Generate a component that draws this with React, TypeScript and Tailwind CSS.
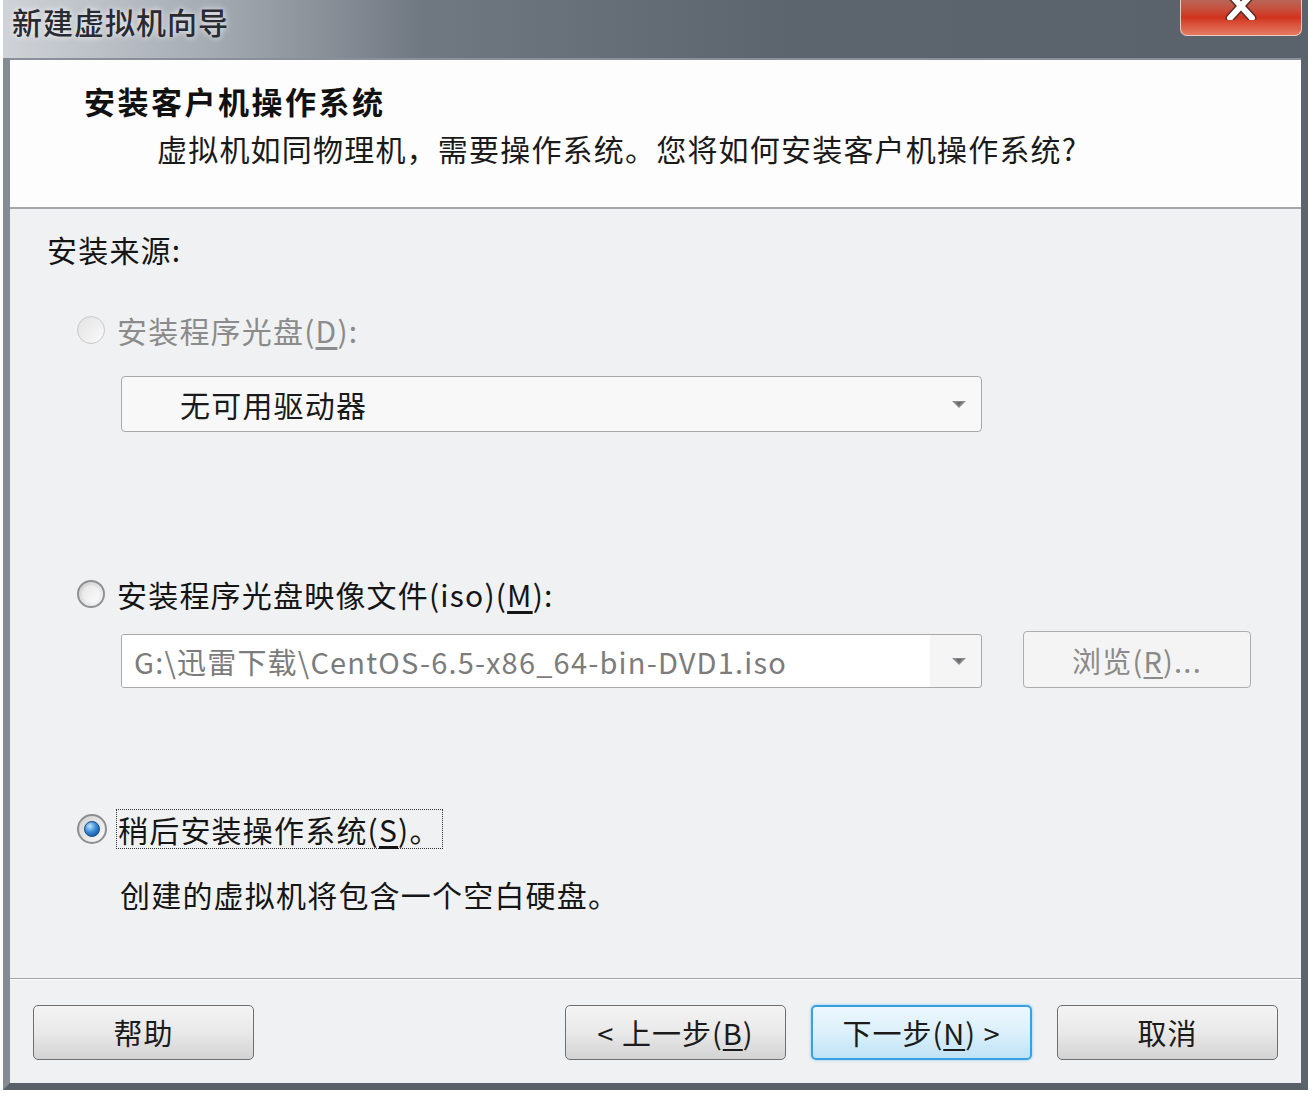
import React from "react";

const font = "font-['Noto_Sans_CJK_SC','Noto_Sans',sans-serif]";

function Radio({ state }: { state: "disabled" | "off" | "on" }) {
  if (state === "disabled") {
    return (
      <span className="w-[28px] h-[28px] rounded-full border border-[#c9c9c9] bg-gradient-to-br from-[#e2e2e2] to-[#fbfbfb] shrink-0" />
    );
  }
  if (state === "off") {
    return (
      <span className="w-[28px] h-[28px] rounded-full border-2 border-[#8f9192] bg-gradient-to-br from-[#cfcfcf] to-[#fafafa] flex items-center justify-center shrink-0">
        <span className="w-[18px] h-[18px] rounded-full bg-gradient-to-br from-[#e4e4e4] to-[#fdfdfd]" />
      </span>
    );
  }
  return (
    <span className="w-[30px] h-[30px] rounded-full border-2 border-[#8c8e90] bg-gradient-to-br from-[#d2d2d2] to-[#fafafa] flex items-center justify-center shrink-0">
      <span className="w-[16px] h-[16px] rounded-full bg-[radial-gradient(circle_at_35%_30%,#bfe6ff_0%,#3a8ad6_45%,#0e3f86_100%)] border border-[#0f4a8f]" />
    </span>
  );
}

function Arrow() {
  return (
    <svg width="16" height="9" viewBox="0 0 16 9">
      <polygon points="1,1 15,1 8,8" fill="#8a8a8a" />
      <polygon points="5,2 11,2 8,6" fill="#6d6670" />
    </svg>
  );
}

function Btn({ children, primary }: { children: React.ReactNode; primary?: boolean }) {
  return (
    <button
      className={
        primary
          ? "w-[221px] h-[55px] rounded-[5px] border-2 border-[#3aa0e2] bg-gradient-to-b from-[#ecf7fd] via-[#dcf0fb] to-[#bfe3f6] shadow-[0_0_3px_#7cc8f2] text-[29px] tracking-[1px] text-[#1b1b1b] flex items-center justify-center"
          : "w-[221px] h-[55px] rounded-[5px] border border-[#6f6f6f] bg-gradient-to-b from-[#f4f4f4] via-[#e9e9e9] to-[#d3d3d3] text-[29px] tracking-[1px] text-[#1b1b1b] flex items-center justify-center"
      }
    >
      {children}
    </button>
  );
}

export default function App() {
  return (
    <div className={`w-[1316px] h-[1120px] bg-white ${font}`}>
      <div className="ml-[3px] w-[1305px] flex flex-col">
        {/* title bar */}
        <div className="h-[58px] bg-[linear-gradient(to_right,#cfd3d8_0%,#a4abb2_16%,#707882_32%,#5c646e_60%,#5a626c_100%)] flex items-start justify-between">
          <span className="ml-[9px] mt-[1px] leading-[40px] text-[30px] font-medium tracking-[1px] text-[#2a2a32] [text-shadow:0_0_6px_#ffffff]">
            新建虚拟机向导
          </span>
          <div className="mr-[6px] w-[122px] h-[36px] rounded-b-[7px] border border-t-0 border-[#e9c9c2] bg-gradient-to-b from-[#b96556] via-[#d1321d] to-[#e47a62] flex items-start justify-center overflow-hidden">
            <svg width="40" height="22" viewBox="0 0 40 22" className="-mt-[2px]">
              <path d="M9 -4 L31 20 M31 -4 L9 20" stroke="#5a2a24" strokeWidth="9" strokeLinecap="round" />
              <path d="M9 -4 L31 20 M31 -4 L9 20" stroke="#ffffff" strokeWidth="6" strokeLinecap="round" />
            </svg>
          </div>
        </div>

        {/* client area */}
        <div className="border-x-[7px] border-b-[7px] border-l-[#858b93] border-r-[#5d646d] border-b-[#5a6068]">
          <div className="border-t-2 border-[#8a9099] flex flex-col">
            <div className="h-[149px] bg-[#fdfdfd] border-b-2 border-[#a3a6aa] flex flex-col">
              <div className="ml-[74px] mt-[21px] leading-[40px] text-[31px] font-bold tracking-[2.5px] text-[#111]">安装客户机操作系统</div>
              <div className="ml-[147px] mt-[7px] leading-[40px] text-[30px] tracking-[1.2px] text-[#1a1a1a]">
                虚拟机如同物理机，需要操作系统。您将如何安装客户机操作系统?
              </div>
            </div>

            <div className="bg-[#f0f1f2] flex flex-col tracking-[1.2px]">
              <div className="ml-[37px] mt-[20px] leading-[40px] text-[30px] text-[#151515]">安装来源:</div>

              <div className="ml-[67px] mt-[41px] h-[40px] flex items-center gap-[12px]">
                <Radio state="disabled" />
                <span className="text-[30px] leading-[40px] text-[#8b8b8b]">
                  安装程序光盘(<span className="underline underline-offset-4">D</span>):
                </span>
              </div>

              <div className="ml-[111px] mt-[26px] w-[861px] h-[56px] rounded-[4px] border border-[#a9a9a9] bg-[#f8f8f8] flex items-center justify-between pl-[58px] pr-[14px]">
                <span className="text-[30px] leading-[40px] text-[#1a1a1a]">无可用驱动器</span>
                <Arrow />
              </div>

              <div className="ml-[67px] mt-[142px] h-[40px] flex items-center gap-[12px]">
                <Radio state="off" />
                <span className="text-[30px] leading-[40px] text-[#151515]">
                  安装程序光盘映像文件(iso)(<span className="underline underline-offset-4">M</span>):
                </span>
              </div>

              <div className="ml-[111px] mt-[17px] flex items-end gap-[41px]">
                <div className="w-[861px] h-[54px] rounded-[3px] border border-[#a9a9a9] bg-[#f5f5f5] flex items-center overflow-hidden">
                  <div className="w-[808px] h-full bg-white flex items-center pl-[12px]">
                    <span className="text-[29px] leading-[40px] text-[#7c7c7c]">G:\迅雷下载\CentOS-6.5-x86_64-bin-DVD1.iso</span>
                  </div>
                  <div className="flex-1 flex items-center justify-center pl-[6px]">
                    <Arrow />
                  </div>
                </div>
                <div className="w-[228px] h-[57px] rounded-[4px] border border-[#adadad] bg-[#f4f4f4] flex items-center justify-center">
                  <span className="text-[29px] leading-[40px] text-[#8a8a8a]">
                    浏览(<span className="underline underline-offset-4">R</span>)...
                  </span>
                </div>
              </div>

              <div className="ml-[67px] mt-[121px] h-[40px] flex items-center gap-[9px]">
                <Radio state="on" />
                <span className="border border-dotted border-[#333] px-[1px] text-[30px] leading-[38px] text-[#151515]">
                  稍后安装操作系统(<span className="underline underline-offset-4">S</span>)。
                </span>
              </div>

              <div className="ml-[110px] mt-[25px] leading-[40px] text-[30px] text-[#151515]">创建的虚拟机将包含一个空白硬盘。</div>

              <div className="mt-[64px] h-[2px] bg-[#a2a4a7] border-b border-white" />

              <div className="mt-[25px] mb-[23px] px-[23px] flex items-center">
                <Btn>帮助</Btn>
                <div className="flex-1" />
                <div className="flex gap-[25px]">
                  <Btn>
                    &lt; 上一步(<span className="underline underline-offset-4">B</span>)
                  </Btn>
                  <Btn primary>
                    下一步(<span className="underline underline-offset-4">N</span>) &gt;
                  </Btn>
                  <Btn>取消</Btn>
                </div>
              </div>
            </div>
          </div>
        </div>
      </div>
    </div>
  );
}
